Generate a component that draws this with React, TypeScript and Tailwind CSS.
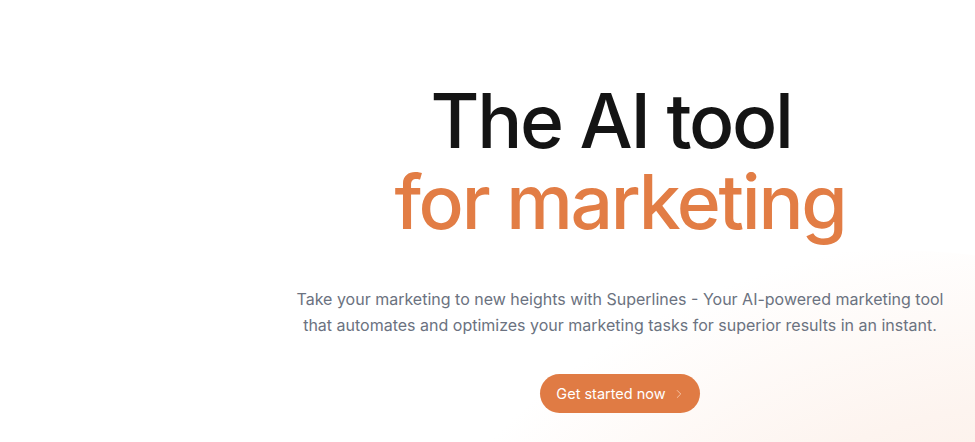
import { ChevronRight } from 'lucide-react';

export default function App() {
  return (
    <main className="relative min-h-[442px] w-full overflow-hidden bg-white font-['Inter',sans-serif]">
      <div className="pointer-events-none absolute left-[435px] top-[250px] h-[520px] w-[900px] rounded-[50%] bg-[radial-gradient(ellipse_at_70%_80%,#fbe9df_0%,#fdf4ef_45%,#ffffff_75%)]" />
      <section className="relative flex flex-col items-center pl-[265px] pt-[80px]">
        <h1 className="text-center text-[75px] font-[550] leading-[81px] tracking-[-0.03em] text-[#141414]">
          <span className="block">The AI tool&nbsp;</span>
          <span className="block text-[#e27d45]">for marketing</span>
        </h1>
        <p className="mt-[44px] text-center text-[16px] leading-[26px] text-[#6b7280]">
          Take your marketing to new heights with Superlines - Your AI-powered marketing tool
          <br />
          that automates and optimizes your marketing tasks for superior results in an instant.
        </p>
        <button className="mt-[36px] flex h-[39px] items-center gap-1.5 rounded-full bg-[#e07b44] pl-4 pr-3.5 text-[14.5px] text-white">
          Get started now
          <ChevronRight className="h-3.5 w-3.5 text-[#f6c9ad]" strokeWidth={1.5} />
        </button>
      </section>
    </main>
  );
}
